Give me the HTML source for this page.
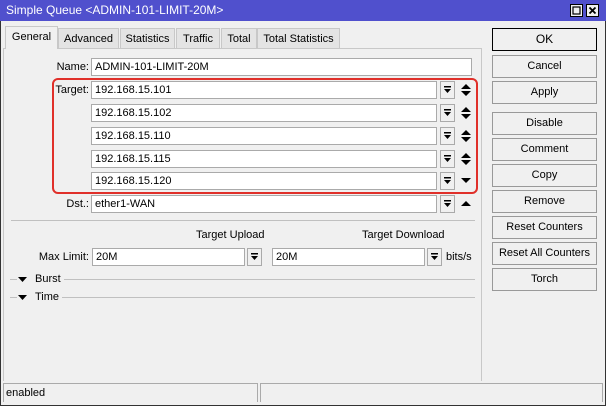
<html><head><style>
body{margin:0;width:606px;height:406px;overflow:hidden;background:#f0f0f0;font-family:"Liberation Sans",sans-serif;font-size:11px;color:#000}
.a{position:absolute}
.win{left:0;top:0;width:604px;height:404px;border:1px solid #333;background:#f0f0f0}
.title{left:0;top:0;width:606px;height:21px;background:#5050cd;color:#fff;font-size:12px;line-height:21px;text-indent:6px}
.tb{top:4px;width:13px;height:13px;background:#f0f0f0;border:1px solid #000;box-sizing:border-box}
.tab{top:28px;height:20px;background:#e4e4e4;border:1px solid #c8c8c8;border-bottom:none;line-height:20px;text-align:center;box-sizing:border-box;font-size:11px}
.panel{left:3px;top:48px;width:479px;height:333px;border:1px solid #c8c8c8;border-bottom:none;background:#f0f0f0;box-sizing:border-box}
.in{height:18px;background:#fff;border:1px solid #aaa;box-sizing:border-box;line-height:16px;padding-left:3px;font-size:11px}
.dd{width:15px;height:18px;border:1px solid #aaa;box-sizing:border-box;background:#f0f0f0}
.dd svg{position:absolute;left:3px;top:4px}
.lbl{text-align:right;line-height:18px}
.btn{left:492px;width:105px;height:23px;border:1px solid #999;box-sizing:border-box;background:#f0f0f0;text-align:center;line-height:21px;font-size:11px}
.hr{height:1px;background:#c0c0c0}
</style></head><body>
<div class="a win"></div>
<div class="a title">Simple Queue &lt;ADMIN-101-LIMIT-20M&gt;</div>
<div class="a tb" style="left:570px"><svg width="11" height="11" class="a" style="left:0;top:0"><rect x="2" y="2" width="7" height="7" fill="none" stroke="#000" stroke-width="1.2"/></svg></div>
<div class="a tb" style="left:586px"><svg width="11" height="11" class="a" style="left:0;top:0"><path d="M2.5 2.5L8.5 8.5M8.5 2.5L2.5 8.5" stroke="#000" stroke-width="1.8"/></svg></div>

<div class="a panel"></div>
<div class="a tab" style="left:5px;top:26px;width:53px;height:23px;background:#f0f0f0;z-index:2">General</div>
<div class="a tab" style="left:58px;width:61px">Advanced</div>
<div class="a tab" style="left:120px;width:55px">Statistics</div>
<div class="a tab" style="left:176px;width:44px">Traffic</div>
<div class="a tab" style="left:221px;width:36px">Total</div>
<div class="a tab" style="left:257px;width:83px">Total Statistics</div>

<div class="a lbl" style="left:40px;top:58px;width:49px">Name:</div>
<div class="a in" style="left:91px;top:58px;width:381px">ADMIN-101-LIMIT-20M</div>

<div class="a" style="left:52px;top:78px;width:422px;height:112px;border:2px solid #e0302a;border-radius:6px"></div>
<div class="a lbl" style="left:40px;top:81px;width:49px">Target:</div>

<svg width="0" height="0" class="a"><defs>
<g id="dn"><rect x="0" y="0" width="7" height="1.5" fill="#000"/><path d="M0 3H7L3.5 7Z" fill="#000"/></g>
<g id="ud"><path d="M0 5H10L5 0Z M0 7H10L5 12Z" fill="#000"/></g>
</defs></svg>

<div class="a in" style="left:91px;top:81px;width:346px">192.168.15.101</div><div class="a dd" style="left:440px;top:81px"><svg width="8" height="8"><use href="#dn"/></svg></div><svg class="a" style="left:461px;top:84px" width="10" height="12"><use href="#ud"/></svg>
<div class="a in" style="left:91px;top:104px;width:346px">192.168.15.102</div><div class="a dd" style="left:440px;top:104px"><svg width="8" height="8"><use href="#dn"/></svg></div><svg class="a" style="left:461px;top:107px" width="10" height="12"><use href="#ud"/></svg>
<div class="a in" style="left:91px;top:127px;width:346px">192.168.15.110</div><div class="a dd" style="left:440px;top:127px"><svg width="8" height="8"><use href="#dn"/></svg></div><svg class="a" style="left:461px;top:130px" width="10" height="12"><use href="#ud"/></svg>
<div class="a in" style="left:91px;top:150px;width:346px">192.168.15.115</div><div class="a dd" style="left:440px;top:150px"><svg width="8" height="8"><use href="#dn"/></svg></div><svg class="a" style="left:461px;top:153px" width="10" height="12"><use href="#ud"/></svg>
<div class="a in" style="left:91px;top:172px;width:346px">192.168.15.120</div><div class="a dd" style="left:440px;top:172px"><svg width="8" height="8"><use href="#dn"/></svg></div><svg class="a" style="left:461px;top:178px" width="10" height="6"><path d="M0 0H10L5 5Z" fill="#000"/></svg>

<div class="a lbl" style="left:40px;top:195px;width:49px">Dst.:</div>
<div class="a in" style="left:91px;top:195px;width:346px">ether1-WAN</div><div class="a dd" style="left:440px;top:195px"><svg width="8" height="8"><use href="#dn"/></svg></div><svg class="a" style="left:461px;top:201px" width="10" height="6"><path d="M0 5H10L5 0Z" fill="#000"/></svg>

<div class="a hr" style="left:11px;top:220px;width:464px"></div>
<div class="a" style="left:196px;top:229px">Target Upload</div>
<div class="a" style="left:362px;top:229px">Target Download</div>
<div class="a lbl" style="left:20px;top:248px;width:69px">Max Limit:</div>
<div class="a in" style="left:92px;top:248px;width:153px">20M</div><div class="a dd" style="left:247px;top:248px"><svg width="8" height="8"><use href="#dn"/></svg></div>
<div class="a in" style="left:272px;top:248px;width:153px">20M</div><div class="a dd" style="left:427px;top:248px"><svg width="8" height="8"><use href="#dn"/></svg></div>
<div class="a" style="left:446px;top:251px">bits/s</div>

<div class="a hr" style="left:10px;top:279px;width:7px"></div>
<svg class="a" style="left:18px;top:277px" width="9" height="5"><path d="M0 0H9L4.5 5Z" fill="#000"/></svg>
<div class="a" style="left:35px;top:273px">Burst</div>
<div class="a hr" style="left:64px;top:279px;width:411px"></div>
<div class="a hr" style="left:10px;top:297px;width:7px"></div>
<svg class="a" style="left:18px;top:295px" width="9" height="5"><path d="M0 0H9L4.5 5Z" fill="#000"/></svg>
<div class="a" style="left:35px;top:291px">Time</div>
<div class="a hr" style="left:62px;top:297px;width:413px"></div>

<div class="a btn" style="top:28px;border-color:#000;font-size:12px">OK</div>
<div class="a btn" style="top:55px">Cancel</div>
<div class="a btn" style="top:81px">Apply</div>
<div class="a btn" style="top:112px">Disable</div>
<div class="a btn" style="top:138px">Comment</div>
<div class="a btn" style="top:164px">Copy</div>
<div class="a btn" style="top:190px">Remove</div>
<div class="a btn" style="top:216px">Reset Counters</div>
<div class="a btn" style="top:242px">Reset All Counters</div>
<div class="a btn" style="top:268px">Torch</div>

<div class="a" style="left:3px;top:383px;width:255px;height:19px;border:1px solid #aaa;border-bottom:none;box-sizing:border-box;line-height:18px;padding-left:2px">enabled</div>
<div class="a" style="left:260px;top:383px;width:343px;height:19px;border:1px solid #aaa;border-bottom:none;box-sizing:border-box"></div>
</body></html>
